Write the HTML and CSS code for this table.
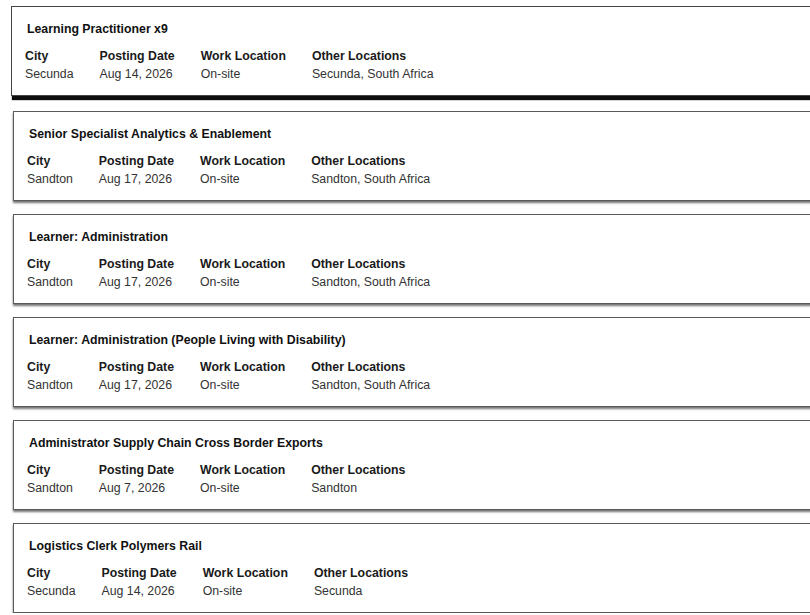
FILE: index.html
```html
<!DOCTYPE html>
<html>
<head>
<meta charset="utf-8">
<link rel="stylesheet" href="styles.css">
</head>
<body>
<div class="list">
  <div class="card card--active">
    <div class="title">Learning Practitioner x9</div>
    <div class="fields">
      <div class="field"><div class="label">City</div><div class="value">Secunda</div></div>
      <div class="field"><div class="label">Posting Date</div><div class="value">Aug 14, 2026</div></div>
      <div class="field"><div class="label">Work Location</div><div class="value">On-site</div></div>
      <div class="field"><div class="label">Other Locations</div><div class="value">Secunda, South Africa</div></div>
    </div>
  </div>
  <div class="card">
    <div class="title">Senior Specialist Analytics &amp; Enablement</div>
    <div class="fields">
      <div class="field"><div class="label">City</div><div class="value">Sandton</div></div>
      <div class="field"><div class="label">Posting Date</div><div class="value">Aug 17, 2026</div></div>
      <div class="field"><div class="label">Work Location</div><div class="value">On-site</div></div>
      <div class="field"><div class="label">Other Locations</div><div class="value">Sandton, South Africa</div></div>
    </div>
  </div>
  <div class="card">
    <div class="title">Learner: Administration</div>
    <div class="fields">
      <div class="field"><div class="label">City</div><div class="value">Sandton</div></div>
      <div class="field"><div class="label">Posting Date</div><div class="value">Aug 17, 2026</div></div>
      <div class="field"><div class="label">Work Location</div><div class="value">On-site</div></div>
      <div class="field"><div class="label">Other Locations</div><div class="value">Sandton, South Africa</div></div>
    </div>
  </div>
  <div class="card">
    <div class="title">Learner: Administration (People Living with Disability)</div>
    <div class="fields">
      <div class="field"><div class="label">City</div><div class="value">Sandton</div></div>
      <div class="field"><div class="label">Posting Date</div><div class="value">Aug 17, 2026</div></div>
      <div class="field"><div class="label">Work Location</div><div class="value">On-site</div></div>
      <div class="field"><div class="label">Other Locations</div><div class="value">Sandton, South Africa</div></div>
    </div>
  </div>
  <div class="card">
    <div class="title">Administrator Supply Chain Cross Border Exports</div>
    <div class="fields">
      <div class="field"><div class="label">City</div><div class="value">Sandton</div></div>
      <div class="field"><div class="label">Posting Date</div><div class="value">Aug 7, 2026</div></div>
      <div class="field"><div class="label">Work Location</div><div class="value">On-site</div></div>
      <div class="field"><div class="label">Other Locations</div><div class="value">Sandton</div></div>
    </div>
  </div>
  <div class="card">
    <div class="title">Logistics Clerk Polymers Rail</div>
    <div class="fields">
      <div class="field"><div class="label">City</div><div class="value">Secunda</div></div>
      <div class="field"><div class="label">Posting Date</div><div class="value">Aug 14, 2026</div></div>
      <div class="field"><div class="label">Work Location</div><div class="value">On-site</div></div>
      <div class="field"><div class="label">Other Locations</div><div class="value">Secunda</div></div>
    </div>
  </div>
</div>
</body>
</html>
```
FILE: styles.css
```css
html, body {
  margin: 0;
  padding: 0;
  background: #ffffff;
  overflow: hidden;
}

body {
  font-family: "Liberation Sans", Arial, sans-serif;
  font-size: 12.3px;
  color: #222;
}

.list {
  display: flex;
  flex-direction: column;
  gap: 13px;
  padding: 8px 0 0 13px;
  width: 840px;
}

.card {
  box-sizing: border-box;
  height: 90px;
  border: 1px solid #5a5a5a;
  background: #fff;
  padding: 15px 13px 12px 13px;
  box-shadow: 0 2px 2px rgba(0, 0, 0, 0.55);
}

.card--active {
  transform: translate(-2px, -2px);
  border-color: #444;
  box-shadow: 1px 4px 1px rgba(0, 0, 0, 0.95);
}

.title {
  font-weight: bold;
  color: #111;
  line-height: 15px;
  padding-left: 2px;
  margin-bottom: 10px;
}

.fields {
  display: flex;
  gap: 26px;
}

.field {
  display: flex;
  flex-direction: column;
}

.label {
  font-weight: bold;
  color: #1a1a1a;
  line-height: 18px;
}

.value {
  color: #333;
  line-height: 18px;
}
```
